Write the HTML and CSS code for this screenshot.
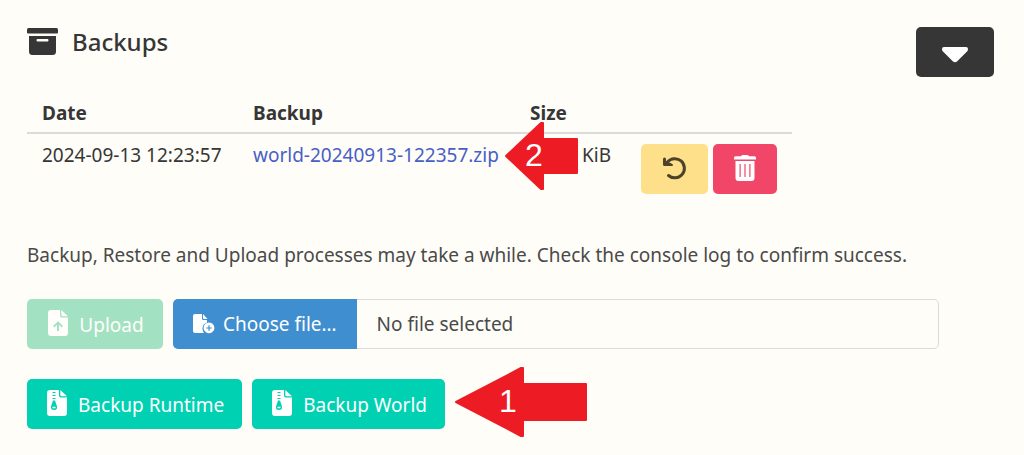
FILE: index.html
```
<!DOCTYPE html>
<html lang="en">
<head>
<meta charset="utf-8">
<meta name="viewport" content="width=device-width, initial-scale=1">
<title>Backups</title>
<link rel="stylesheet" href="styles.css">
</head>
<body>
<svg class="sprite" aria-hidden="true">
  <symbol id="zip" viewBox="0 0 20 26">
    <path fill="currentColor" fill-rule="evenodd" d="M3 0h9v5.500q0 2 2 2h6V23q0 3-3 3H3q-3 0-3-3V3q0-3 3-3zM5.500 2v1h3v-1zM5.500 5v1h3v-1zM5.500 8v1h3v-1zM6 10.500L4 16.500q-.6 3.500 3 3.500t3-3.500L8 10.500zM5.500 16.800h3v1.400h-3z"/>
    <path fill="currentColor" d="M13.300 0L20 6.300h-5.200q-1.500 0-1.500-1.500z"/>
  </symbol>
</svg>
<main class="panel">
  <header class="panel-header">
    <h1 class="title">
      <svg class="title-icon" viewBox="0 0 32 28" aria-hidden="true"><path fill="currentColor" d="M1.500 0h28q1.500 0 1.500 1.500v3q0 1-1 1H1q-1 0-1-1v-3Q0 0 1.500 0z"/><path fill="currentColor" fill-rule="evenodd" d="M2 8h27v15.500q0 3.500-3.500 3.500h-20Q2 27 2 23.500zM10.500 11q-1 0-1 1.200t1 1.200h10q1 0 1-1.200t-1-1.200z"/></svg>
      Backups
    </h1>
    <button class="button dark" type="button" aria-label="Toggle backups"><svg class="caret" viewBox="0 0 26 16" aria-hidden="true"><path fill="currentColor" d="M2 0h22q2 0 2 2 0 1.500-1 2.500L15 14.500q-2 1.500-4 0L1 4.500Q0 3.500 0 2 0 0 2 0z"/></svg></button>
  </header>

  <div class="table-wrap">
    <table class="table">
      <thead>
        <tr><th class="col-date">Date</th><th class="col-file">Backup</th><th class="col-size">Size</th><th class="col-actions"></th></tr>
      </thead>
      <tbody>
        <tr>
          <td>2024-09-13 12:23:57</td>
          <td><a class="link" href="#world">world-20240913-122357.zip</a></td>
          <td class="size">KiB
            <svg class="marker marker-two" viewBox="0 0 74 68" role="img" aria-label="2"><path class="marker-shape" d="M1 34L36 1h2v16h34v34H38v16h-2z"/><text class="marker-text" x="20" y="44">2</text></svg>
          </td>
          <td>
            <div class="actions">
              <button class="button warning" type="button" aria-label="Restore"><svg class="undo" viewBox="0 0 24 24" aria-hidden="true"><path fill="none" stroke="currentColor" stroke-width="3" stroke-linecap="round" d="M4.500 6A9.600 9.600 0 1 1 5.500 19.500"/><path fill="currentColor" d="M1.500 1.500q1.500 0 1.500 1.500v2L8.500 7.500Q10 8 10 9t-1 1H1.500Q0 10 0 8.500V3q0-1.500 1.500-1.500z"/></svg></button>
              <button class="button danger" type="button" aria-label="Delete"><svg class="trash" viewBox="0 0 22 26" aria-hidden="true"><path fill="currentColor" d="M7 1.200Q7.500 0 9 0h4q1.500 0 2 1.200h5.500q1.500 0 1.500 1.500v1.800H0V2.700q0-1.500 1.500-1.500z"/><path fill="currentColor" fill-rule="evenodd" d="M1.500 6h19v17q0 3-3 3h-13q-3 0-3-3zM5.500 9v13h1.200V9zM10.400 9v13h1.200V9zM15.300 9v13h1.200V9z"/></svg></button>
            </div>
          </td>
        </tr>
      </tbody>
    </table>
  </div>

  <p class="note">Backup, Restore and Upload processes may take a while. Check the console log to confirm success.</p>

  <form class="upload">
    <button class="button success" type="button" disabled><svg class="icon" viewBox="0 0 20 26" aria-hidden="true"><path fill="currentColor" fill-rule="evenodd" d="M3 0h9v5.500q0 2 2 2h6V23q0 3-3 3H3q-3 0-3-3V3q0-3 3-3zM9 21h2v-6.200l2.700 2.600 1.200-1.300L10 11.300 5.100 16.100l1.200 1.300 2.700-2.600z"/><path fill="currentColor" d="M13.300 0L20 6.300h-5.200q-1.500 0-1.500-1.500z"/></svg>Upload</button>
    <label class="file">
      <input class="file-input" type="file">
      <span class="file-button"><svg class="file-icon" viewBox="0 0 22 20" aria-hidden="true"><path fill="currentColor" d="M2 0h7v4.500Q9 6 10.500 6H14v2.500Q9.500 10 9.500 14.500 9.500 17 11 19H2q-2 0-2-2V2q0-2 2-2z"/><path fill="currentColor" d="M10 0l4.500 5H11q-1 0-1-1z"/><path fill="currentColor" fill-rule="evenodd" d="M16 8.500a5.400 5.400 0 1 0 .01 0zM15.400 11.200h1.200v2.200h2.200v1.200h-2.200v2.200h-1.200v-2.200h-2.200v-1.200h2.200z"/></svg>Choose file…</span>
      <span class="file-name">No file selected</span>
    </label>
  </form>

  <div class="buttons">
    <button class="button primary" type="button"><svg class="icon" aria-hidden="true"><use href="#zip"/></svg>Backup Runtime</button>
    <button class="button primary" type="button"><svg class="icon" aria-hidden="true"><use href="#zip"/></svg>Backup World</button>
    <svg class="marker marker-one" viewBox="0 0 134 72" role="img" aria-label="1"><path class="marker-shape" d="M1 36L66 2h2v16h63v36H68v16h-2z"/><text class="marker-text" x="44" y="46">1</text></svg>
  </div>
</main>
</body>
</html>
```
FILE: styles.css
```
* { box-sizing: border-box; }

body {
  margin: 0;
  background: #fffdf8;
  color: #363636;
  font: 19px/24px "Noto Sans", "Open Sans", sans-serif;
}

.sprite { position: absolute; width: 0; height: 0; }

.panel { padding: 27px 30px 26px 27px; }

.panel-header {
  display: flex;
  align-items: flex-start;
  justify-content: space-between;
}

.title {
  display: flex;
  align-items: center;
  gap: 13px;
  margin: 0;
  font-size: 24px;
  font-weight: 500;
  line-height: 30px;
}

.title-icon { width: 32px; height: 28px; }

.button {
  display: inline-flex;
  align-items: center;
  justify-content: center;
  height: 50px;
  padding: 1px 18px 0 20px;
  border: 0;
  border-radius: 5px;
  color: #fff;
  font: inherit;
  white-space: nowrap;
}

.dark { width: 78px; padding: 0; background: #363636; }
.warning { width: 67px; padding: 0; background: #ffe08a; color: #4d4329; }
.danger { width: 64px; padding: 0; background: #f14668; }
.success { width: 136px; background: #48c78e; }
.success:disabled { opacity: 0.5; }
.primary { background: #00d1b2; }

.caret { width: 26px; height: 16px; flex: none; margin-top: 6px; }
.undo { width: 24px; height: 24px; flex: none; }
.trash { width: 22px; height: 26px; flex: none; }
.icon { width: 20px; height: 26px; flex: none; margin-right: 11px; }
.file-icon { width: 22px; height: 20px; flex: none; margin-right: 8px; }

.icon, .undo, .trash { margin-bottom: 3px; }

.table-wrap { margin-top: 14px; }

.table {
  border-collapse: separate;
  border-spacing: 0;
  table-layout: fixed;
  width: 765px;
}

.table th {
  padding: 10px 15px 7px;
  border-bottom: 2px solid #dbdbdb;
  text-align: left;
  font-weight: 700;
}

.table td {
  padding: 10px 15px;
  vertical-align: top;
  line-height: 22px;
  white-space: nowrap;
}

.col-date { width: 211px; }
.col-file { width: 277px; }
.col-size { width: 111px; }

.link { color: #485fc7; text-decoration: none; }

.table .size { position: relative; text-align: right; }

.actions { display: flex; gap: 5px; }

.note { margin: 39px 0 32px; color: #4a4a4a; }

.upload { display: flex; gap: 10px; }

.file {
  display: flex;
  flex: 0 1 766px;
  position: relative;
}

.file-input { position: absolute; width: 1px; height: 1px; opacity: 0; }

.file-button {
  display: flex;
  align-items: center;
  padding: 0 20px;
  border-radius: 5px 0 0 5px;
  background: #3e8ed0;
  color: #fff;
  white-space: nowrap;
}

.file-name {
  flex: 1;
  padding: 12px 20px;
  border: 1px solid #dbdbdb;
  border-left: 0;
  border-radius: 0 5px 5px 0;
  color: #4a4a4a;
}

.buttons {
  display: flex;
  gap: 10px;
  position: relative;
  width: fit-content;
  margin-top: 30px;
}

.marker { position: absolute; }
.marker-two { left: -10px; top: -12px; width: 74px; height: 68px; }
.marker-one { left: 100%; top: -13px; width: 134px; height: 72px; margin-left: 10px; }
.marker-shape { fill: #ed1c24; stroke: #ed1c24; stroke-width: 2; stroke-linejoin: round; }
.marker-text { fill: #fff; font: 32px "Liberation Sans", Arial, sans-serif; }
```
